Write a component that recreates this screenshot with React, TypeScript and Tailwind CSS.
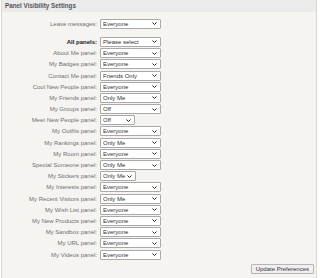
const rows: { label: string; value: string; w?: number; bold?: boolean }[] = [
  { label: 'All panels:', value: 'Please select', bold: true },
  { label: 'About Me panel:', value: 'Everyone' },
  { label: 'My Badges panel:', value: 'Everyone' },
  { label: 'Contact Me panel:', value: 'Friends Only' },
  { label: 'Cool New People panel:', value: 'Everyone' },
  { label: 'My Friends panel:', value: 'Only Me' },
  { label: 'My Groups panel:', value: 'Off' },
  { label: 'Meet New People panel:', value: 'Off', w: 35 },
  { label: 'My Outfits panel:', value: 'Everyone' },
  { label: 'My Rankings panel:', value: 'Only Me' },
  { label: 'My Room panel:', value: 'Everyone' },
  { label: 'Special Someone panel:', value: 'Only Me' },
  { label: 'My Stickers panel:', value: 'Only Me', w: 36 },
  { label: 'My Interests panel:', value: 'Everyone' },
  { label: 'My Recent Visitors panel:', value: 'Only Me' },
  { label: 'My Wish List panel:', value: 'Everyone' },
  { label: 'My New Products panel:', value: 'Everyone' },
  { label: 'My Sandbox panel:', value: 'Everyone' },
  { label: 'My URL panel:', value: 'Everyone' },
  { label: 'My Videos panel:', value: 'Everyone' },
];

function FakeSelect({ value, w = 61 }: { value: string; w?: number }) {
  return (
    <div
      className="flex items-center justify-between h-[10px] bg-white border border-[#a9a9a9] rounded-[1px] pl-[2px] pr-[3px] text-[#333]"
      style={{ width: w }}
    >
      <span className="leading-none">{value}</span>
      <svg width="5" height="3" viewBox="0 0 5 3">
        <path d="M0.5 0.5 L2.5 2.5 L4.5 0.5" fill="none" stroke="#222" strokeWidth="1" />
      </svg>
    </div>
  );
}

function Row({ label, value, w, bold }: { label: string; value: string; w?: number; bold?: boolean }) {
  return (
    <div className="flex items-center h-[11.2px]">
      <div className={`w-[98px] text-right pr-[3px] leading-none ${bold ? 'font-bold text-[#222]' : 'text-[#707070]'}`}>
        {label}
      </div>
      <FakeSelect value={value} w={w} />
    </div>
  );
}

export default function App() {
  return (
    <div className="w-[320px] h-[278px] bg-white overflow-hidden" style={{ fontFamily: '"Liberation Sans", Arial, sans-serif' }}>
      <div className="ml-[1px] w-[316px] h-[278px] bg-[#f5f4f0] border-l border-r border-[#d8d8d8] text-[6px]">
        {/* header */}
        <div className="h-[12px] bg-[#ebebeb] flex items-center pl-[3px] font-bold text-[6.3px] text-[#555]">
          Panel Visibility Settings
        </div>

        <div className="pt-[6.4px]">
          <Row label="Leave messages:" value="Everyone" />
          <div className="h-[6.8px]" />
          {rows.map(r => (
            <Row key={r.label} {...r} />
          ))}
        </div>

        <div className="flex justify-end pr-[2px] mt-[3.5px]">
          <button className="h-[10px] px-[4px] bg-[#f0f0f0] border border-[#b5b5b5] rounded-[1px] text-[6px] leading-none text-[#334]">
            Update Preferences
          </button>
        </div>
      </div>
    </div>
  );
}
